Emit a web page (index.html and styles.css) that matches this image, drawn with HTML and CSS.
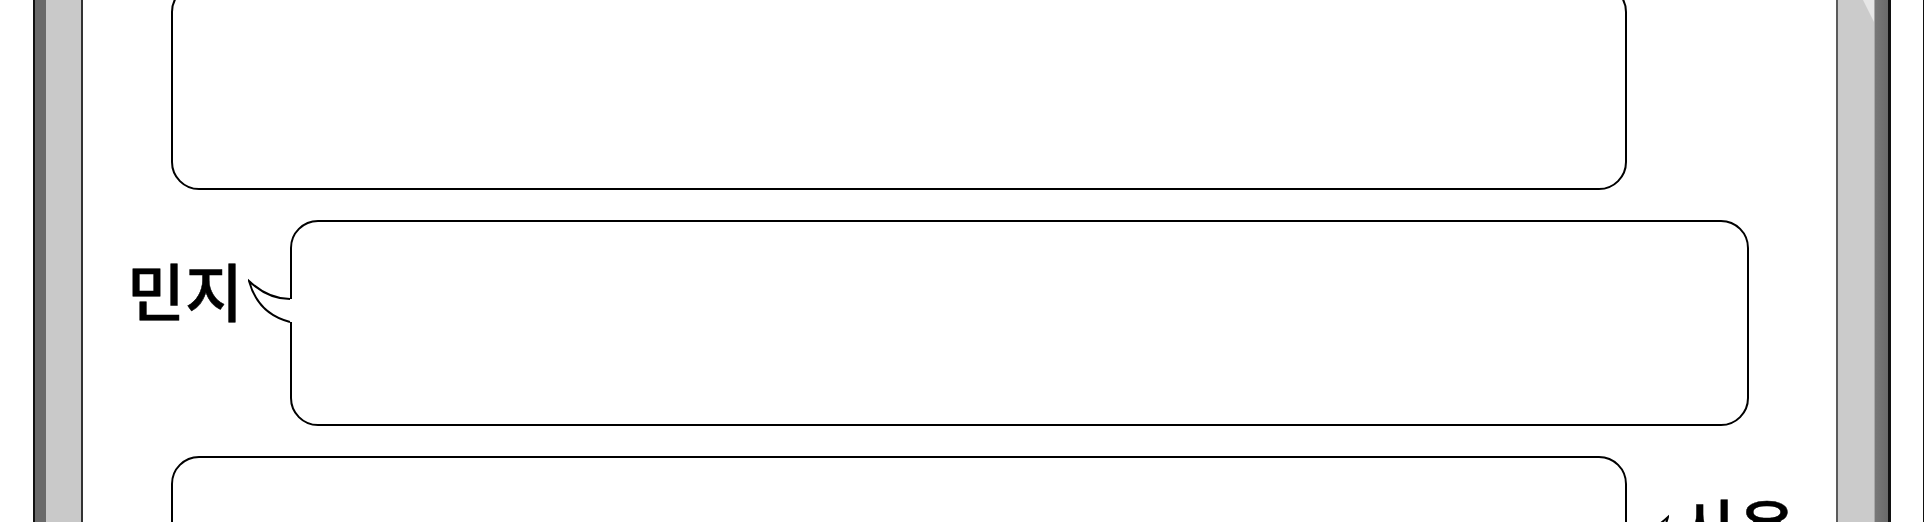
FILE: index.html
```html
<!DOCTYPE html>
<html lang="ko">
<head>
<meta charset="utf-8">
<title>대화</title>
<link rel="stylesheet" href="styles.css">
</head>
<body>
<div class="page">
  <div class="gutter"></div>
  <div class="frame frame-left"></div>
  <main class="content">
    <div class="row row-a">
      <div class="bubble"></div>
    </div>
    <div class="row row-b">
      <div class="speaker">민지</div>
      <div class="bubble">
        <svg class="tail tail-left" width="46" height="48" viewBox="0 0 46 48" aria-hidden="true">
          <path d="M45,21 L42,21 Q20,21 1,3 Q10,36 42,44 L45,44" fill="#fff" stroke="none"/>
          <path d="M42,21 Q20,21 1,3 Q10,36 42,44" fill="none" stroke="#000" stroke-width="2"/>
        </svg>
      </div>
    </div>
    <div class="row row-c">
      <div class="bubble">
        <svg class="tail tail-right" width="46" height="48" viewBox="0 0 46 48" aria-hidden="true">
          <path d="M1,21 L4,21 Q26,21 45,3 Q36,36 4,44 L1,44" fill="#fff" stroke="none"/>
          <path d="M4,21 Q26,21 45,3 Q36,36 4,44" fill="none" stroke="#000" stroke-width="2"/>
        </svg>
      </div>
      <div class="speaker">사용</div>
    </div>
  </main>
  <div class="frame frame-right">
    <div class="shine"></div>
  </div>
  <div class="edge"></div>
</div>
</body>
</html>
```
FILE: styles.css
```css
html, body {
  margin: 0;
  padding: 0;
  background: #fff;
}

.page {
  display: flex;
  width: 1924px;
  height: 522px;
  overflow: hidden;
  background: #fff;
}

.gutter {
  width: 33px;
  flex: none;
}

.frame {
  flex: none;
  height: 100%;
}

.frame-left {
  width: 50px;
  background: linear-gradient(to right,
    #111 0, #111 2px,
    #6a6a6a 2px, #6a6a6a 13px,
    #c9c9c9 13px, #c9c9c9 48px,
    #333 48px, #333 50px);
}

.frame-right {
  position: relative;
  width: 55px;
  background: linear-gradient(to right,
    #5a5a5a 0, #5a5a5a 2px,
    #cbcbcb 2px, #cbcbcb 38px,
    #a9a9a9 38px, #a9a9a9 39px,
    #787878 39px, #6a6a6a 52px,
    #111 52px, #111 55px);
}

.shine {
  position: absolute;
  left: 27px;
  top: 0;
  width: 11px;
  height: 22px;
  background: #e6e6e6;
  clip-path: polygon(0 0, 100% 0, 100% 100%);
}

.edge {
  flex: 1;
  height: 100%;
  border-right: 1px solid #111;
}

.content {
  flex: none;
  width: 1753px;
  height: 100%;
  display: flex;
  flex-direction: column;
  gap: 29px;
  font-family: "Noto Sans CJK KR", "Noto Sans", sans-serif;
}

.row {
  display: flex;
  align-items: flex-start;
  flex: none;
}

.bubble {
  position: relative;
  box-sizing: border-box;
  height: 206px;
  border: 2px solid #000;
  border-radius: 28px;
  background: #fff;
  flex: none;
}

.row-a {
  margin-top: -16px;
  padding-left: 88px;
}
.row-a .bubble {
  width: 1456px;
}

.row-b {
  margin-top: 1px;
  padding-left: 44px;
}
.row-b .bubble {
  width: 1459px;
  margin-left: auto;
  margin-right: 87px;
}

.row-c {
  margin-top: 1px;
  padding-left: 88px;
}
.row-c .bubble {
  width: 1456px;
}

.speaker {
  font-size: 63px;
  font-weight: 500;
  -webkit-text-stroke: 0.5px #000;
  line-height: 1;
  color: #000;
  margin-top: 37px;
  white-space: nowrap;
}

.row-c .speaker {
  margin-left: 53px;
}

.tail {
  position: absolute;
  top: 56px;
}
.tail-left {
  left: -44px;
}
.tail-right {
  right: -44px;
}
```
